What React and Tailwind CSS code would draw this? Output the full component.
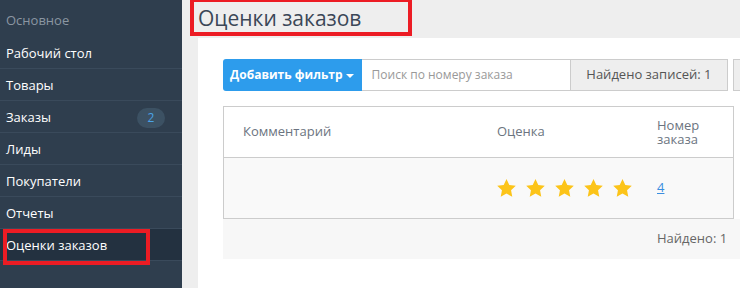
import React from "react";

const menu = [
  { label: "Рабочий стол" },
  { label: "Товары" },
  { label: "Заказы", badge: 2 },
  { label: "Лиды" },
  { label: "Покупатели" },
  { label: "Отчеты" },
  { label: "Оценки заказов", active: true },
];

const Star = () => (
  <svg width="21" height="21" viewBox="0 0 24 24" className="shrink-0">
    <path
      d="M12 1.2l3.2 6.8 7.4.9-5.4 5.1 1.4 7.4L12 17.8l-6.6 3.6 1.4-7.4-5.4-5.1 7.4-.9z"
      fill="#fcc419"
    />
  </svg>
);

export default function App() {
  return (
    <div
      className="relative flex h-[288px] w-[740px] overflow-hidden bg-[#eeeeee]"
      style={{ fontFamily: '"Open Sans", "Noto Sans", sans-serif' }}
    >
      {/* sidebar */}
      <aside className="w-[182px] shrink-0 bg-[#2f3e4e]">
        <div className="flex h-[37px] items-center px-[6px] pt-[4px] text-[13px] text-[#8b96a2]">Основное</div>
        {menu.map((m) => (
          <div
            key={m.label}
            className={`flex h-[32px] items-center justify-between border-b border-[#3a4a5b] pl-[6px] pr-[17px] pt-[2px] text-[13px] text-white ${
              m.active ? "bg-[#233140]" : ""
            }`}
          >
            <span>{m.label}</span>
            {m.badge && (
              <span className="flex h-[20px] w-[28px] items-center justify-center rounded-full bg-[#3c5163] text-[12px] text-[#4aa3e6]">
                {m.badge}
              </span>
            )}
          </div>
        ))}
      </aside>

      {/* main */}
      <main className="flex min-w-0 flex-1 flex-col">
        <div className="flex h-[38px] shrink-0 items-center pl-[16px] text-[21px] text-[#3b4757]">
          Оценки заказов
        </div>
        <div className="ml-[16px] flex-1 overflow-hidden bg-white pl-[25px] pt-[21px]">
          {/* filter row */}
          <div className="flex h-[32px] w-[520px] text-[12px]">
            <button className="flex w-[140px] items-center justify-center gap-[4px] rounded-l-[3px] bg-[#2d9cec] font-bold text-white">
              Добавить фильтр
              <span className="mt-[1px] border-x-[4px] border-t-[4px] border-x-transparent border-t-white" />
            </button>
            <div className="flex w-[210px] items-center border-y border-[#cccccc] px-[10px] text-[#999999]">
              Поиск по номеру заказа
            </div>
            <div className="flex w-[160px] items-center justify-center border border-[#cccccc] bg-[#eeeeee] text-[13px] text-[#555555]">
              Найдено записей: 1
            </div>
            <div className="ml-[5px] w-[10px] border border-[#cccccc] bg-[#eeeeee]" />
          </div>

          {/* table */}
          <div className="mt-[15px] w-[511px] border border-[#cccccc] text-[13px]">
            <div className="flex h-[51px] items-center border-b border-[#cccccc] text-[#6b7480]">
              <div className="w-[254px] pl-[19px]">Комментарий</div>
              <div className="w-[160px] pl-[19px]">Оценка</div>
              <div className="w-[60px] pl-[19px] leading-[14px]">Номер заказа</div>
            </div>
            <div className="flex h-[60px] items-center bg-[#f9f9f9]">
              <div className="w-[254px]" />
              <div className="flex w-[160px] gap-[8px] pl-[18px]">
                <Star />
                <Star />
                <Star />
                <Star />
                <Star />
              </div>
              <div className="pl-[19px] text-[#3a8ee0] underline">4</div>
            </div>
          </div>
          <div className="flex h-[40px] w-[530px] items-center bg-[#f7f7f7] pl-[434px] text-[13px] text-[#666666]">
            Найдено: 1
          </div>
        </div>
      </main>

      {/* red annotation boxes */}
      <div className="pointer-events-none absolute left-[190px] top-[-2px] h-[38px] w-[222px] border-[4px] border-[#ec1c24]" />
      <div className="pointer-events-none absolute left-[3px] top-[229px] h-[36px] w-[147px] border-[4px] border-[#ec1c24]" />
    </div>
  );
}
